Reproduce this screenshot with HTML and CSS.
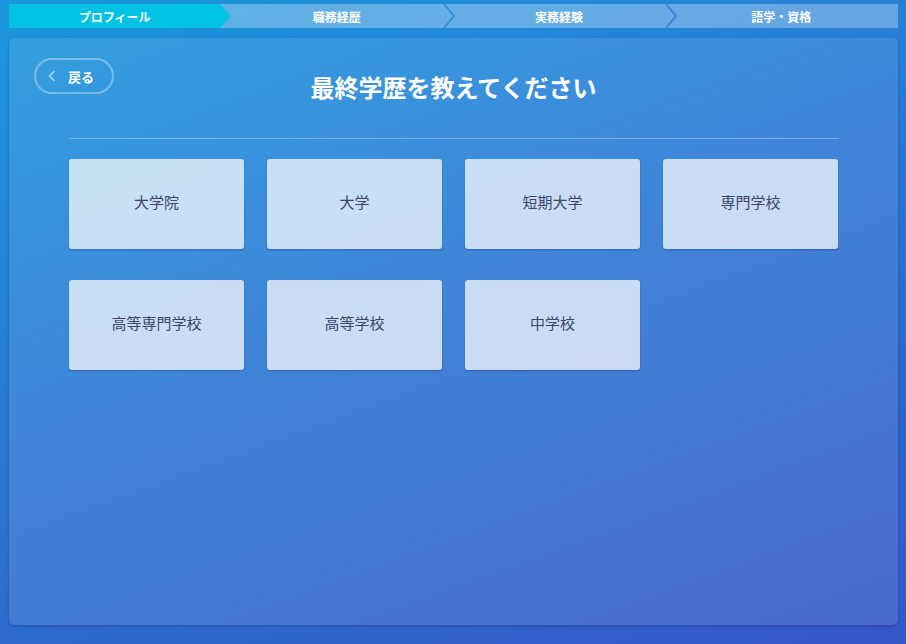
FILE: index.html
```html
<!DOCTYPE html>
<html lang="ja">
<head>
<meta charset="utf-8">
<link rel="stylesheet" href="styles.css">
</head>
<body>
<nav class="steps">
  <div class="step active"><span>プロフィール</span></div>
  <div class="step"><span>職務経歴</span><svg class="sep" viewBox="0 0 12 24" width="12" height="24"><polyline points="1,0 11,12 1,24" fill="none" stroke="#2a8ad6" stroke-width="1.5"/></svg></div>
  <div class="step"><span>実務経験</span><svg class="sep" viewBox="0 0 12 24" width="12" height="24"><polyline points="1,0 11,12 1,24" fill="none" stroke="#2f80d6" stroke-width="1.5"/></svg></div>
  <div class="step"><span>語学・資格</span></div>
</nav>
<main class="card">
  <header class="head">
    <button class="back">
      <svg viewBox="0 0 10 14" width="8" height="12"><polyline points="8,1 2,7 8,13" fill="none" stroke="rgba(255,255,255,0.6)" stroke-width="2"/></svg>
      <span>戻る</span>
    </button>
    <h1 class="title">最終学歴を教えてください</h1>
    <div></div>
  </header>
  <div class="divider"></div>
  <div class="grid">
    <button class="tile">大学院</button>
    <button class="tile">大学</button>
    <button class="tile">短期大学</button>
    <button class="tile">専門学校</button>
    <button class="tile">高等専門学校</button>
    <button class="tile">高等学校</button>
    <button class="tile">中学校</button>
  </div>
</main>
</body>
</html>
```
FILE: styles.css
```css
html, body { height: 100%; }
body {
  margin: 0;
  padding: 4px 8px 0 9px;
  box-sizing: border-box;
  background: linear-gradient(160deg, #1a97dc 0%, #2a78d4 45%, #3556c8 100%);
  font-family: "Noto Sans CJK JP", "Noto Sans", sans-serif;
  overflow: hidden;
}
.steps {
  display: flex;
  height: 24px;
  background: rgba(255,255,255,0.3);
}
.step {
  flex: 1;
  position: relative;
  display: flex;
  align-items: center;
  justify-content: center;
  padding-right: 11px;
  color: #fff;
  font-size: 12px;
  font-weight: 700;
}
.step span { position: relative; z-index: 2; }
.step.active {
  background: #00c3e3;
  clip-path: polygon(0 0, calc(100% - 11px) 0, 100% 50%, calc(100% - 11px) 100%, 0 100%);
}
.sep {
  position: absolute;
  right: -1px;
  top: 0;
  z-index: 1;
}
.card {
  margin-top: 10px;
  height: 587px;
  box-sizing: border-box;
  border-radius: 5px;
  background: rgba(255,255,255,0.1);
  box-shadow: 0 1px 3px rgba(0,0,40,0.25);
  padding: 20px 25px;
}
.head {
  display: grid;
  grid-template-columns: 1fr auto 1fr;
  align-items: start;
  height: 80px;
}
.back {
  justify-self: start;
  width: 80px;
  height: 36px;
  box-sizing: border-box;
  border: 2px solid rgba(255,255,255,0.35);
  border-radius: 18px;
  background: transparent;
  color: #fff;
  font-family: inherit;
  font-size: 13px;
  font-weight: 700;
  display: flex;
  align-items: center;
  gap: 12px;
  padding: 0 0 0 12px;
  cursor: pointer;
}
.title {
  margin: 12px 0 0;
  color: #fff;
  font-size: 24px;
  font-weight: 700;
  line-height: 34px;
}
.divider {
  margin: 0 34px 0 35px;
  height: 1px;
  background: rgba(255,255,255,0.3);
}
.grid {
  margin: 20px 34px 0 35px;
  display: grid;
  grid-template-columns: repeat(4, 175px);
  grid-auto-rows: 90px;
  column-gap: 23px;
  row-gap: 31px;
}
.tile {
  border: none;
  border-radius: 3px;
  background: rgba(255,255,255,0.72);
  box-shadow: 0 1px 2px rgba(0,0,60,0.25);
  color: #3d4668;
  font-family: inherit;
  font-size: 15px;
  padding: 0 0 5px;
  cursor: pointer;
}
```
